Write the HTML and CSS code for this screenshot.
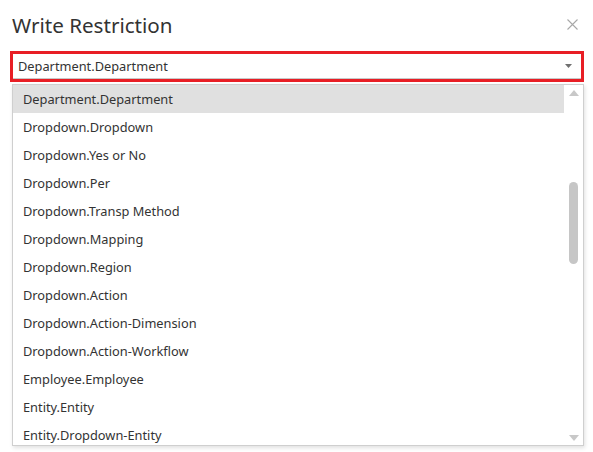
FILE: index.html
```html
<!DOCTYPE html>
<html lang="en">
<head>
<meta charset="utf-8">
<title>Write Restriction</title>
<link rel="stylesheet" href="styles.css">
</head>
<body>
<div class="dialog">
  <div class="header">
    <h1 class="title">Write Restriction</h1>
    <button class="close" aria-label="Close">
      <svg width="11" height="11" viewBox="0 0 11 11"><path d="M0.5 0.5 L10.5 10.5 M10.5 0.5 L0.5 10.5" stroke="#a8a8a8" stroke-width="1.1" fill="none"/></svg>
    </button>
  </div>
  <div class="combo">
    <div class="combo-inner">
      <span class="combo-value">Department.Department</span>
      <svg class="combo-arrow" width="7" height="4" viewBox="0 0 7 4"><path d="M0 0 H7 L3.5 4 Z" fill="#707070"/></svg>
    </div>
  </div>
  <div class="listbox">
    <ul class="options">
      <li class="option selected">Department.Department</li>
      <li class="option">Dropdown.Dropdown</li>
      <li class="option">Dropdown.Yes or No</li>
      <li class="option">Dropdown.Per</li>
      <li class="option">Dropdown.Transp Method</li>
      <li class="option">Dropdown.Mapping</li>
      <li class="option">Dropdown.Region</li>
      <li class="option">Dropdown.Action</li>
      <li class="option">Dropdown.Action-Dimension</li>
      <li class="option">Dropdown.Action-Workflow</li>
      <li class="option">Employee.Employee</li>
      <li class="option">Entity.Entity</li>
      <li class="option">Entity.Dropdown-Entity</li>
    </ul>
    <div class="scrollbar">
      <svg class="sb-arrow" width="10" height="6" viewBox="0 0 10 6"><path d="M0 6 H10 L5 0 Z" fill="#c8c8c8"/></svg>
      <div class="sb-track"><div class="sb-thumb"></div></div>
      <svg class="sb-arrow" width="10" height="6" viewBox="0 0 10 6"><path d="M0 0 H10 L5 6 Z" fill="#c8c8c8"/></svg>
    </div>
  </div>
</div>
</body>
</html>
```

FILE: styles.css
```css
html, body {
  margin: 0;
  padding: 0;
  background: #ffffff;
}
body {
  width: 593px;
  height: 452px;
  overflow: hidden;
  font-family: "Noto Sans", "Open Sans", "Liberation Sans", sans-serif;
  color: #333333;
}
.dialog {
  display: flex;
  flex-direction: column;
}
.header {
  display: flex;
  justify-content: space-between;
  align-items: center;
  height: 51px;
  padding: 0 15px 0 12px;
  box-sizing: border-box;
}
.title {
  margin: 0;
  font-weight: 400;
  font-size: 20.6px;
  color: #333333;
  position: relative;
  top: -1px;
}
.close {
  border: 0;
  background: none;
  padding: 0;
  width: 11px;
  height: 11px;
  display: flex;
  position: relative;
  top: -1px;
}
.combo {
  margin: 0 9px 0 10px;
  border: 3px solid #e81e25;
  height: 31px;
  box-sizing: border-box;
}
.combo-inner {
  height: 100%;
  box-sizing: border-box;
  border-bottom: 1px solid #c8c8c8;
  display: flex;
  align-items: center;
  justify-content: space-between;
  padding: 0 9px 0 5px;
}
.combo-value {
  font-size: 12.8px;
  color: #333;
}
.listbox {
  margin: 2px 9px 0 12px;
  height: 362px;
  border: 1px solid #cfcfcf;
  box-shadow: 1px 2px 4px rgba(0, 0, 0, 0.12);
  display: flex;
  overflow: hidden;
  box-sizing: border-box;
}
.options {
  list-style: none;
  margin: 0;
  padding: 0;
  flex: 1;
}
.option {
  height: 28px;
  box-sizing: border-box;
  padding-top: 1px;
  line-height: 27px;
  padding-left: 10px;
  font-size: 12.8px;
  color: #333;
  white-space: nowrap;
}
.option.selected {
  background: #e0e0e0;
}
.scrollbar {
  width: 19px;
  display: flex;
  flex-direction: column;
  align-items: center;
  padding: 5px 0 4px;
  box-sizing: border-box;
}
.sb-arrow {
  flex: none;
}
.sb-track {
  flex: 1;
  width: 100%;
  display: flex;
  justify-content: center;
  padding-top: 86px;
  box-sizing: border-box;
}
.sb-thumb {
  width: 9px;
  height: 82px;
  border-radius: 5px;
  background: #c6c6c6;
}
```
